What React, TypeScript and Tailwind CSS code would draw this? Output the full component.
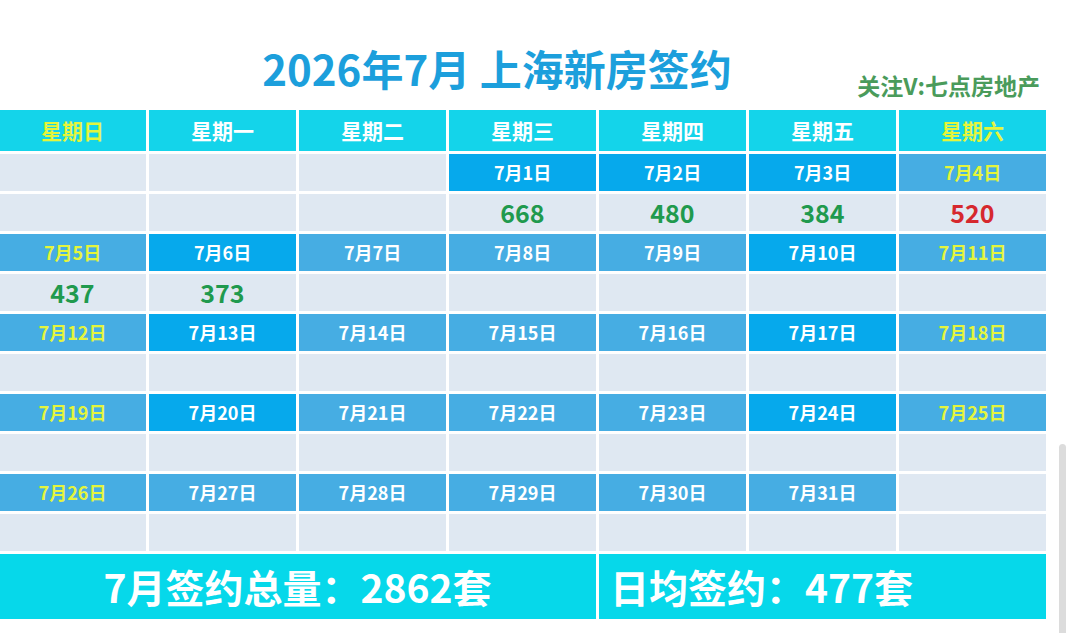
const FONT = { fontFamily: '"Noto Sans CJK SC", "Noto Sans", sans-serif' };

const WEEKDAYS = ["星期日", "星期一", "星期二", "星期三", "星期四", "星期五", "星期六"];

// each week: 7 slots of [day, signings]
type Slot = { day: number | null; value?: number };

const WEEKS: Slot[][] = [
  [{ day: null }, { day: null }, { day: null }, { day: 1, value: 668 }, { day: 2, value: 480 }, { day: 3, value: 384 }, { day: 4, value: 520 }],
  [{ day: 5, value: 437 }, { day: 6, value: 373 }, { day: 7 }, { day: 8 }, { day: 9 }, { day: 10 }, { day: 11 }],
  [{ day: 12 }, { day: 13 }, { day: 14 }, { day: 15 }, { day: 16 }, { day: 17 }, { day: 18 }],
  [{ day: 19 }, { day: 20 }, { day: 21 }, { day: 22 }, { day: 23 }, { day: 24 }, { day: 25 }],
  [{ day: 26 }, { day: 27 }, { day: 28 }, { day: 29 }, { day: 30 }, { day: 31 }, { day: null }],
];

// darker blue date cells
const BRIGHT_DAYS = [1, 2, 3, 6, 10, 13, 17, 20, 24];

function DateCell({ slot, col }: { slot: Slot; col: number }) {
  if (slot.day === null) return <div className="h-[37px] bg-[#dfe8f2]" />;
  const weekend = col === 0 || col === 6;
  const bg = BRIGHT_DAYS.includes(slot.day) ? "bg-[#06a9ec]" : "bg-[#46ade3]";
  return (
    <div
      className={`flex h-[37px] items-center justify-center text-[18px] font-bold ${bg} ${
        weekend ? "text-[#e4f53c]" : "text-white"
      }`}
    >
      7月{slot.day}日
    </div>
  );
}

function ValueCell({ slot }: { slot: Slot }) {
  const red = slot.value === 520;
  return (
    <div
      className={`flex h-[37px] items-center justify-center bg-[#dfe8f2] text-[25px] font-bold ${
        red ? "text-[#d6282e]" : "text-[#1f9a4e]"
      }`}
    >
      {slot.value ?? ""}
    </div>
  );
}

export default function App() {
  return (
    <div className="relative h-[633px] w-[1080px] overflow-hidden bg-white" style={FONT}>
      {/* title */}
      <div className="relative h-[110px]">
        <h1 className="w-[994px] pt-[40px] text-center text-[42px] font-bold leading-[56px] text-[#1c9fdc]">
          2026年7月 上海新房签约
        </h1>
        <div className="absolute right-[40px] top-[70px] text-[23px] font-bold leading-[30px] text-[#4a9b5b]">
          关注V:七点房地产
        </div>
      </div>

      <div className="-ml-px grid w-[1047px] grid-cols-[repeat(7,147px)] gap-[3px]">
        {WEEKDAYS.map((d, i) => (
          <div
            key={d}
            className={`flex h-[41px] items-center justify-center bg-[#14d4ea] text-[21px] font-bold ${
              i === 0 || i === 6 ? "text-[#e4f53c]" : "text-white"
            }`}
          >
            {d}
          </div>
        ))}

        {WEEKS.map((week, w) => (
          <div key={w} className="contents">
            {week.map((slot, c) => (
              <DateCell key={`d${c}`} slot={slot} col={c} />
            ))}
            {week.map((slot, c) => (
              <ValueCell key={`v${c}`} slot={slot} />
            ))}
          </div>
        ))}

        <div className="col-span-4 flex h-[65px] items-center justify-center bg-[#06d8ea] text-[39px] font-bold text-white">
          7月签约总量：2862套
        </div>
        <div className="col-span-3 flex h-[65px] items-center bg-[#06d8ea] pl-[11px] text-[39px] font-bold text-white">
          日均签约：477套
        </div>
      </div>

      {/* scroll indicator */}
      <div className="absolute left-[1059px] top-[444px] h-[200px] w-[7px] rounded-full bg-[#dcdcdc]" />
    </div>
  );
}
